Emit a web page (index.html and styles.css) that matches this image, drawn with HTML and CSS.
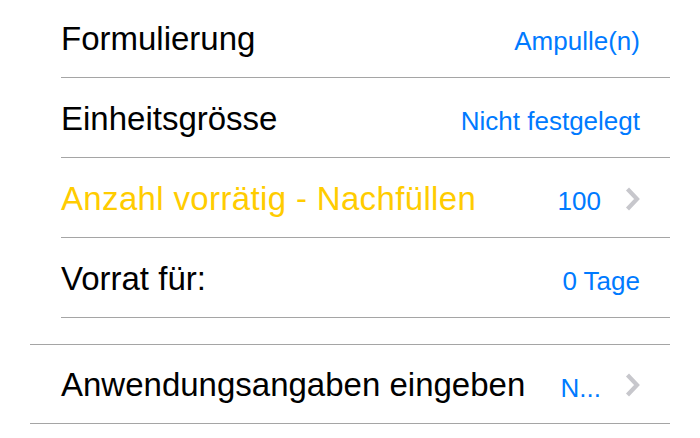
FILE: index.html
```html
<!DOCTYPE html>
<html lang="de">
<head>
  <meta charset="UTF-8" />
  <meta name="viewport" content="width=device-width, initial-scale=1.0" />
  <title>Medikament</title>
  <link rel="stylesheet" href="styles.css">
</head>
<body>
  <div class="table">
    <div class="group first">
      <div class="row">
        <div class="row-inner">
          <span class="label">Formulierung</span>
          <span class="value">Ampulle(n)</span>
        </div>
      </div>
      <div class="row">
        <div class="row-inner">
          <span class="label">Einheitsgrösse</span>
          <span class="value">Nicht festgelegt</span>
        </div>
      </div>
      <div class="row">
        <div class="row-inner">
          <span class="label warn">Anzahl vorrätig - Nachfüllen</span>
          <span class="value">100</span>
          <svg class="chevron" width="15" height="24" viewBox="0 0 15 24">
            <path d="M2.5 2 L12 12 L2.5 22" fill="none" stroke="#c7c7cc" stroke-width="4.2" />
          </svg>
        </div>
      </div>
      <div class="row">
        <div class="row-inner">
          <span class="label">Vorrat für:</span>
          <span class="value">0 Tage</span>
        </div>
      </div>
    </div>

    <div class="group second">
      <div class="row">
        <div class="row-inner">
          <span class="label">Anwendungsangaben eingeben</span>
          <span class="value">N...</span>
          <svg class="chevron" width="15" height="24" viewBox="0 0 15 24">
            <path d="M2.5 2 L12 12 L2.5 22" fill="none" stroke="#c7c7cc" stroke-width="4.2" />
          </svg>
        </div>
      </div>
    </div>
  </div>
</body>
</html>
```

FILE: styles.css
```css
body {
  margin: 0;
  background-color: #fff;
  font-family: 'Liberation Sans', Arial, sans-serif;
  color: #000;
  overflow: hidden;
}

.table {
  margin: 0 30px;
}

.group.first {
  margin-top: -2px;
}

.group.second {
  margin-top: 26px;
  border-top: 1px solid #a5a5a5;
  border-bottom: 1px solid #a5a5a5;
}

.row {
  padding-left: 31px;
}

.row-inner {
  display: flex;
  align-items: center;
  box-sizing: border-box;
  height: 80px;
  padding-right: 30px;
  border-bottom: 1px solid #a5a5a5;
}

.second .row-inner {
  height: 78px;
  border-bottom: none;
}

.label {
  flex: 1;
  font-size: 33px;
  padding-top: 2px;
  white-space: nowrap;
}

.label.warn {
  color: #ffcc00;
  letter-spacing: 0.35px;
}

.value {
  font-size: 26px;
  color: #007aff;
  padding-top: 8px;
  white-space: nowrap;
}

.chevron {
  margin-left: 24px;
  margin-top: 2px;
  flex-shrink: 0;
}
```
